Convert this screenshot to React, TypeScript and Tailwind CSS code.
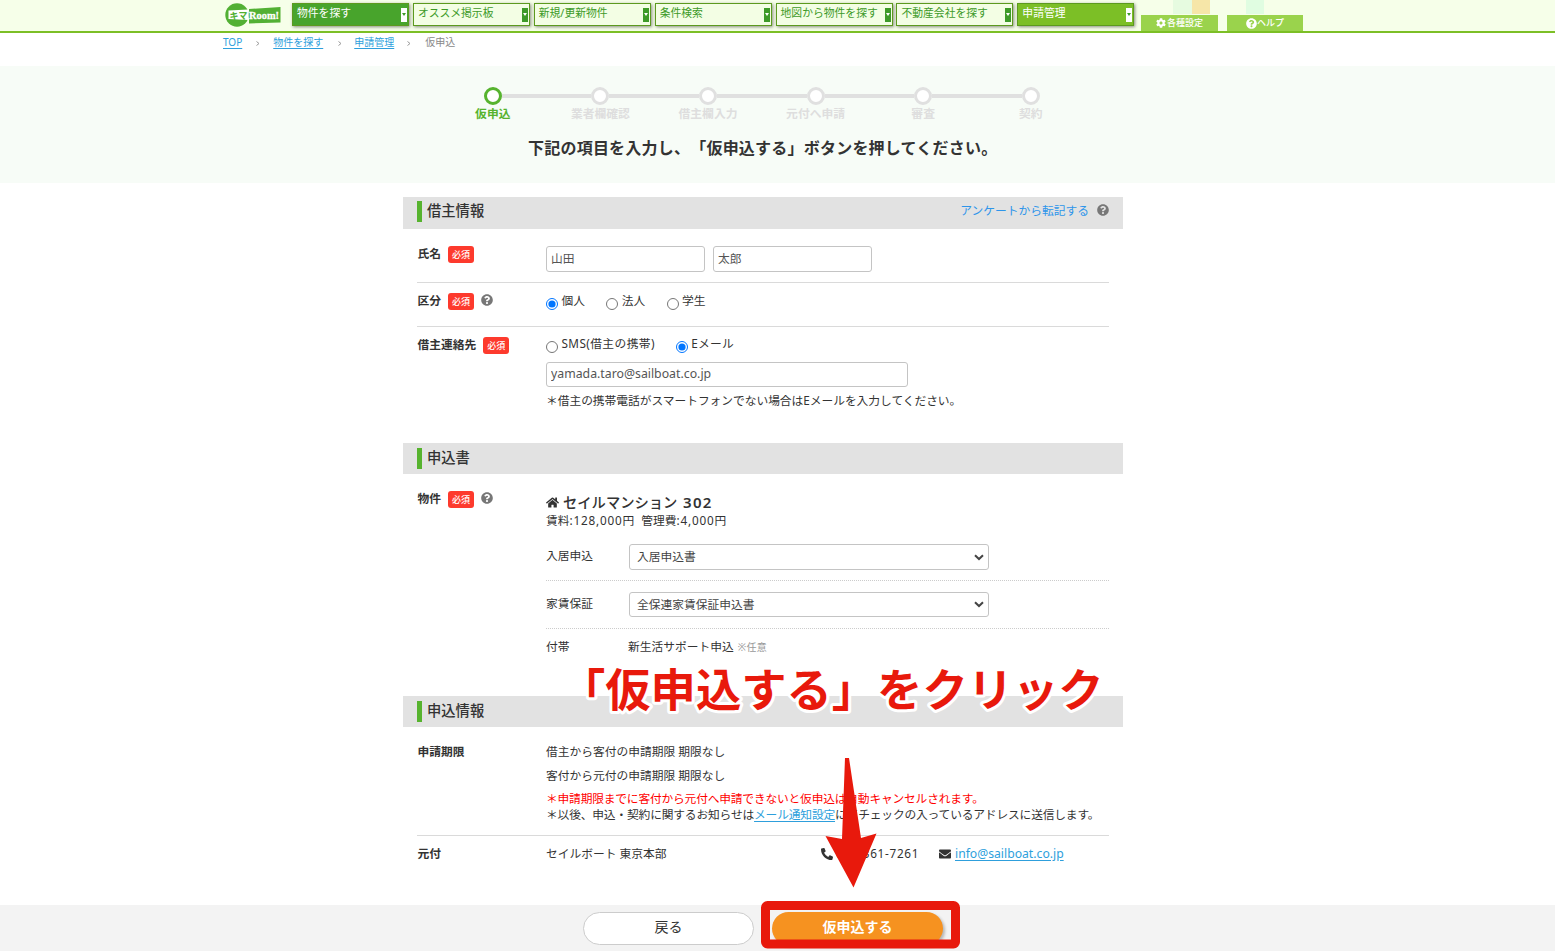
import { ReactNode } from "react";
import { clsx } from "clsx";
import {
  FaCog,
  FaEnvelope,
  FaHome,
  FaPhoneAlt,
  FaQuestionCircle,
} from "react-icons/fa";

type MenuStyle = "light" | "dark" | "active";

const menus: { label: string; style: MenuStyle }[] = [
  { label: "物件を探す", style: "dark" },
  { label: "オススメ掲示板", style: "light" },
  { label: "新規/更新物件", style: "light" },
  { label: "条件検索", style: "light" },
  { label: "地図から物件を探す", style: "light" },
  { label: "不動産会社を探す", style: "light" },
  { label: "申請管理", style: "active" },
];

const steps = [
  "仮申込",
  "業者欄確認",
  "借主欄入力",
  "元付へ申請",
  "審査",
  "契約",
];

const Logo = () => (
  <svg className="ml-[225px] mt-[2px] h-[26px] w-[56px]" viewBox="0 0 56 26">
    <circle cx="12" cy="13" r="11.7" fill="#52b034" />
    <path d="M24 7 L55.5 5 V20.500 L24 21.500 Z" fill="#52b034" />
    <path d="M3.500 8.500 L23.500 7.500 V18 L3.500 17 Z" fill="#fff" />
    <text
      x="4.500"
      y="16.500"
      fontSize="9.500"
      fontWeight="700"
      textLength="18"
      lengthAdjust="spacingAndGlyphs"
      fill="#52b034"
      fontFamily="Noto Sans CJK JP, sans-serif"
    >
      キマ
    </text>
    <text
      x="24"
      y="17"
      fontSize="10.500"
      fontWeight="700"
      textLength="30"
      lengthAdjust="spacingAndGlyphs"
      fill="#fff"
      stroke="#fff"
      strokeWidth="0.300"
      fontFamily="Liberation Serif, serif"
    >
      Room!
    </text>
  </svg>
);

const MenuButton = ({ label, style }: { label: string; style: MenuStyle }) => (
  <button
    className={clsx(
      "flex h-[23px] w-[117px] shrink-0 items-center justify-between border border-[#5c9a1e] pl-1 pr-px text-[10.8px] shadow-[1px_1px_3px_rgba(0,0,0,0.45)]",
      style === "light" && "bg-[#f3fee4] text-[#3d9a28]",
      style === "dark" && "bg-[#48a42c] text-white",
      style === "active" && "bg-[#7cbf26] text-white"
    )}
  >
    <span className="-mt-[3px] whitespace-nowrap leading-4">{label}</span>
    <span
      className={clsx(
        "flex h-[14px] w-[6px] items-center justify-center",
        style === "light" ? "bg-[#3d9a28] text-white" : "bg-white text-[#3d9a28]"
      )}
    >
      <svg className="h-[3px] w-1" viewBox="0 0 4 3">
        <path d="M0 0 H4 L2 3 Z" fill="currentColor" />
      </svg>
    </span>
  </button>
);

const Header = () => (
  <header className="flex h-[33px] items-start border-b-2 border-[#7cbf26] bg-[#f6ffe9]">
    <Logo />
    <nav className="ml-[11px] mt-[3px] flex gap-[3.9px]">
      {menus.map((menu) => (
        <MenuButton key={menu.label} label={menu.label} style={menu.style} />
      ))}
    </nav>
    <div className="ml-[6.6px] w-[77px]">
      <div className="ml-8 flex h-[14px]">
        <span className="w-[19px] bg-[#e6fbe0]" />
        <span className="w-[18px] shrink-0 bg-[#f6e6a8]" />
      </div>
      <div className="mt-px flex h-4 items-center justify-center gap-px bg-[#9ad34c] text-[9px] font-medium text-white">
        <FaCog className="text-[10px]" />
        各種設定
      </div>
    </div>
    <div className="ml-[9px] w-[76px]">
      <div className="ml-[19px] h-[14px] w-[18px] bg-[#e0fde1]" />
      <div className="mt-px flex h-4 items-center justify-center bg-[#9ad34c] text-[9px] font-medium text-white">
        <FaQuestionCircle className="text-[11px]" />
        ヘルプ
      </div>
    </div>
  </header>
);

const Crumb = ({ children }: { children: ReactNode }) => (
  <a className="text-[#2e9fdc] underline underline-offset-2" href="#">
    {children}
  </a>
);

const Arrow = ({ className }: { className: string }) => (
  <svg className={className} width="4" height="5" viewBox="0 0 4 5">
    <path d="M0.500 0.500 L3 2.500 L0.500 4.500" fill="none" stroke="#999" />
  </svg>
);

const Breadcrumb = () => (
  <div className="flex h-[33px] items-start pl-[223px] pt-[1px] text-[10px] leading-4">
    <Crumb>TOP</Crumb>
    <Arrow className="ml-[14px] mr-[13px] mt-[7px]" />
    <Crumb>物件を探す</Crumb>
    <Arrow className="ml-[15px] mr-[12px] mt-[7px]" />
    <Crumb>申請管理</Crumb>
    <Arrow className="ml-[13px] mr-[14px] mt-[7px]" />
    <span className="text-[#888]">仮申込</span>
  </div>
);

const Stepper = () => (
  <div className="h-[117px] bg-[#f7fcf7] pt-[21px]">
    <ol className="ml-[439px] flex">
      {steps.map((step, index) => (
        <li
          key={step}
          className={clsx(
            "flex w-[107.6px] flex-col items-center text-[11.8px] font-bold leading-4",
            index === 0 ? "text-[#56b32e]" : "text-[#dedede]"
          )}
        >
          <div className="flex w-full items-center">
            <span className={clsx("h-1 flex-1", index > 0 && "bg-[#e0e0e0]")} />
            <span
              className={clsx(
                "h-[18px] w-[18px] rounded-full border-[3px] bg-white",
                index === 0 ? "border-[#56b32e]" : "border-[#e0e0e0]"
              )}
            />
            <span
              className={clsx(
                "h-1 flex-1",
                index < steps.length - 1 && "bg-[#e0e0e0]"
              )}
            />
          </div>
          {step}
        </li>
      ))}
    </ol>
    <h1 className="ml-[528px] mt-[15px] text-[16px] font-bold leading-6 tracking-[0.22px] [text-spacing-trim:space-all]">
      下記の項目を入力し、「仮申込する」ボタンを押してください。
    </h1>
  </div>
);

const SectionTitle = ({
  title,
  className,
  children,
}: {
  title: string;
  className: string;
  children?: ReactNode;
}) => (
  <div
    className={clsx(
      "flex items-start justify-between bg-[#e2e2e2] px-[14px]",
      className
    )}
  >
    <h2 className="flex h-[21px] items-center border-l-[5px] border-[#56b32e] pb-[2px] pl-[5px] text-[14.3px] font-medium">
      {title}
    </h2>
    {children}
  </div>
);

const Required = () => (
  <span className="ml-[7px] flex h-[17px] w-[26px] items-center justify-center rounded-[3px] bg-[#fd3a2d] text-[9px] font-medium text-white">
    必須
  </span>
);

const Row = ({
  label,
  required,
  help,
  className,
  children,
}: {
  label: string;
  required?: boolean;
  help?: boolean;
  className: string;
  children: ReactNode;
}) => (
  <div
    className={clsx(
      "mx-[14px] grid grid-cols-[129px_1fr] items-start border-[#dadada]",
      className
    )}
  >
    <div className="flex h-[18px] items-start pl-[0.5px] font-bold leading-4">
      {label}
      {required && (
        <span className="mt-px">
          <Required />
        </span>
      )}
      {help && (
        <FaQuestionCircle className="ml-[7px] mt-[2px] text-[12px] text-[#777]" />
      )}
    </div>
    <div>{children}</div>
  </div>
);

const Radio = ({
  label,
  name,
  checked,
  className,
}: {
  label: string;
  name: string;
  checked?: boolean;
  className?: string;
}) => (
  <label
    className={clsx(
      "flex h-[18px] items-start gap-[3.5px] whitespace-nowrap leading-4",
      className
    )}
  >
    <input
      className="mt-[6px] h-3 w-3 accent-[#0075ff]"
      type="radio"
      name={name}
      defaultChecked={checked}
    />
    {label}
  </label>
);

const TextInput = ({ value, className }: { value: string; className: string }) => (
  <input
    className={clsx(
      "rounded-[3px] border border-[#c4c4c4] bg-white px-1 text-[#555] outline-none",
      className
    )}
    type="text"
    defaultValue={value}
  />
);

const Select = ({ value, className }: { value: string; className: string }) => (
  <div
    className={clsx(
      "flex w-[360px] items-center justify-between rounded-[3px] border border-[#c4c4c4] pl-[7px] pr-1 text-[#444]",
      className
    )}
  >
    {value}
    <svg className="h-[7px] w-[10px]" viewBox="0 0 10 7">
      <path d="M1 1.200 L5 5 L9 1.200" fill="none" stroke="#444" strokeWidth="2" />
    </svg>
  </div>
);

// Red callout that explains which button to press
const Callout = () => (
  <svg
    className="pointer-events-none absolute left-0 top-0 h-[951px] w-[1555px]"
    viewBox="0 0 1555 951"
  >
    <text
      x="560"
      y="706.500"
      fontSize="45.300"
      fontWeight="700"
      fill="#e8190c"
      stroke="#fff"
      strokeWidth="6"
      strokeLinejoin="round"
      paintOrder="stroke"
      fontFamily="Noto Sans CJK JP, sans-serif"
    >
      「仮申込する」をクリック
    </text>
    <path
      d="M845 758 H849 L861 838 L876.500 833.500 L853.500 887.500 L825.500 836 L842 839 Z"
      fill="#e8190c"
    />
    <rect
      x="765.500"
      y="905.500"
      width="190"
      height="38.500"
      rx="2"
      fill="none"
      stroke="#e8190c"
      strokeWidth="9"
    />
  </svg>
);

export default function App() {
  return (
    <div className="relative h-[951px] w-[1555px] overflow-hidden bg-white font-['Noto_Sans','Noto_Sans_CJK_JP',sans-serif] text-[11.75px] text-[#333]">
      <Header />
      <Breadcrumb />
      <Stepper />

      <main className="ml-[403px] mt-[14px] w-[720px]">
        <SectionTitle title="借主情報" className="h-8 pt-1">
          <div className="flex items-center gap-2 pt-px leading-4">
            <a className="text-[#2e95ea]" href="#">
              アンケートから転記する
            </a>
            <FaQuestionCircle className="text-[12px] text-[#777]" />
          </div>
        </SectionTitle>
        <Row label="氏名" required className="h-[54px] border-b pt-4">
          <div className="mt-px flex gap-2">
            <TextInput value="山田" className="h-[26px] w-[159px] pb-[3px]" />
            <TextInput value="太郎" className="h-[26px] w-[159px] pb-[3px]" />
          </div>
        </Row>
        <Row label="区分" required help className="h-[44px] border-b pt-[9px]">
          <div className="flex gap-[21.3px]">
            <Radio name="kubun" label="個人" checked />
            <Radio name="kubun" label="法人" />
            <Radio name="kubun" label="学生" />
          </div>
        </Row>
        <Row label="借主連絡先" required className="h-[116px] pt-[9px]">
          <div className="-mt-px flex gap-[21px]">
            <Radio
              name="contact"
              label="SMS(借主の携帯)"
              className="tracking-[0.4px]"
            />
            <Radio
              name="contact"
              label="Eメール"
              className="tracking-[0.2px]"
              checked
            />
          </div>
          <TextInput
            value="yamada.taro@sailboat.co.jp"
            className="mt-[9px] block h-[25px] w-[362px] pb-[2px] text-[12.3px]"
          />
          <p className="mt-[5px] leading-4 tracking-[-0.04px]">
            ＊借主の携帯電話がスマートフォンでない場合はEメールを入力してください。
          </p>
        </Row>

        <SectionTitle title="申込書" className="h-[31px] pt-[5px]" />
        <Row label="物件" required help className="h-[222px] pt-4">
          <div className="flex h-5 items-center gap-1 pt-1 text-[14.3px] font-medium">
            <FaHome className="text-[13px]" />
            <span>
              セイルマンション{" "}
              <span className="ml-[2px] text-[15px] font-semibold tracking-[1.3px]">
                302
              </span>
            </span>
          </div>
          <p className="mt-[2px] flex gap-[7px] leading-4">
            <span>
              賃料<span className="tracking-[0.8px]">:128,000</span>円
            </span>
            <span>
              管理費<span className="tracking-[0.8px]">:4,000</span>円
            </span>
          </p>
          <div className="mt-4 flex h-[37px] border-b border-dotted border-[#ccc]">
            <span className="w-[83px] pt-[3px] leading-4">入居申込</span>
            <Select value="入居申込書" className="h-[26px]" />
          </div>
          <div className="mt-[11px] flex h-[37px] border-b border-dotted border-[#ccc]">
            <span className="w-[83px] pt-[3px] leading-4">家賃保証</span>
            <Select value="全保連家賃保証申込書" className="h-[25px]" />
          </div>
          <div className="mt-[9px] flex leading-4">
            <span className="w-[82px]">付帯</span>
            新生活サポート申込
            <span className="ml-1 pt-px text-[10px] tracking-[0.3px] text-[#999]">
              ※任意
            </span>
          </div>
        </Row>

        <SectionTitle title="申込情報" className="h-[31px] pt-[5px]" />
        <Row label="申請期限" className="h-[109px] border-b pt-4">
          <p className="leading-4">借主から客付の申請期限 期限なし</p>
          <p className="mt-2 leading-4">客付から元付の申請期限 期限なし</p>
          <p className="mt-[7px] leading-4 tracking-[-0.2px] text-[#f00]">
            ＊申請期限までに客付から元付へ申請できないと仮申込は自動キャンセルされます。
          </p>
          <p className="whitespace-nowrap leading-4 tracking-[-0.18px]">
            ＊以後、申込・契約に関するお知らせは
            <a className="text-[#2e9fdc] underline underline-offset-2" href="#">
              メール通知設定
            </a>
            にてチェックの入っているアドレスに送信します。
          </p>
        </Row>
        <Row label="元付" className="h-[69px] pt-[9px]">
          <div className="flex items-start leading-4">
            <span className="w-[275px]">セイルボート 東京本部</span>
            <FaPhoneAlt className="mt-[3px] text-[12px]" />
            <span className="ml-[3px] w-[103px] tracking-[0.7px]">03-5361-7261</span>
            <FaEnvelope className="mt-[3px] text-[12px]" />
            <a
              className="ml-1 pt-px text-[12.2px] text-[#2e9fdc] underline underline-offset-2"
              href="#"
            >
              info@sailboat.co.jp
            </a>
          </div>
        </Row>
      </main>

      <footer className="flex h-[46px] items-start gap-[18px] bg-[#f3f3f3] pl-[583px] pt-[7px] text-[14px]">
        <button className="h-[33px] w-[171px] rounded-full border border-[#ccc] bg-white pb-1">
          戻る
        </button>
        <button className="h-[33px] w-[171px] rounded-full bg-[#f69220] pb-[5px] font-bold text-white shadow-[2px_2px_3px_rgba(0,0,0,0.25)]">
          仮申込する
        </button>
      </footer>

      <Callout />
    </div>
  );
}
